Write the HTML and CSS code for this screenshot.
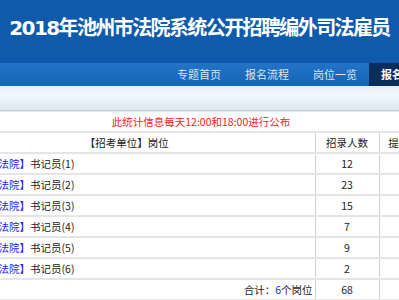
FILE: index.html
```html
<!DOCTYPE html>
<html lang="zh-CN">
<head>
  <meta charset="UTF-8">
  <title>2018年池州市法院系统公开招聘编外司法雇员</title>
  <link rel="stylesheet" href="styles.css">
</head>
<body>

<div class="header">
  <h1>2018年池州市法院系统公开招聘编外司法雇员</h1>
</div>

<div class="nav">
  <ul>
    <li><a href="#">专题首页</a></li>
    <li><a href="#">报名流程</a></li>
    <li><a href="#">岗位一览</a></li>
    <li class="active"><a href="#">报名统计</a></li>
    <li><a href="#">成绩查询</a></li>
  </ul>
</div>

<div class="band"></div>

<div class="main">
  <table>
    <colgroup>
      <col class="c-post">
      <col class="c-num">
      <col class="c-sub">
    </colgroup>
    <tr class="notice">
      <td colspan="3">此统计信息每天12:00和18:00进行公布</td>
    </tr>
    <tr>
      <th class="col-post">【招考单位】岗位</th>
      <th class="col-num">招录人数</th>
      <th class="col-sub">提交报名人数</th>
    </tr>
    <tr>
      <td class="post"><span class="unit">【池州市中级法院】</span>书记员(1)</td>
      <td class="num">12</td>
      <td class="sub"></td>
    </tr>
    <tr>
      <td class="post"><span class="unit">【池州市中级法院】</span>书记员(2)</td>
      <td class="num">23</td>
      <td class="sub"></td>
    </tr>
    <tr>
      <td class="post"><span class="unit">【池州市中级法院】</span>书记员(3)</td>
      <td class="num">15</td>
      <td class="sub"></td>
    </tr>
    <tr>
      <td class="post"><span class="unit">【池州市中级法院】</span>书记员(4)</td>
      <td class="num">7</td>
      <td class="sub"></td>
    </tr>
    <tr>
      <td class="post"><span class="unit">【池州市中级法院】</span>书记员(5)</td>
      <td class="num">9</td>
      <td class="sub"></td>
    </tr>
    <tr>
      <td class="post"><span class="unit">【池州市中级法院】</span>书记员(6)</td>
      <td class="num">2</td>
      <td class="sub"></td>
    </tr>
    <tr class="total">
      <td class="post">合计：<span class="count">6</span>个岗位</td>
      <td class="num">68</td>
      <td class="sub"></td>
    </tr>
  </table>
</div>

</body>
</html>
```

FILE: styles.css
```css
body { margin: 0; overflow: hidden; background: #fff; font-family: "Noto Sans CJK SC", sans-serif; color: #222; }

.header { height: 63px; background: #0f5aaa; box-sizing: border-box; padding-top: 16px; }
.header h1 { margin: 0; text-align: center; color: #fff; font-family: "DejaVu Sans", "Noto Sans CJK SC", sans-serif; font-size: 20px; line-height: 24px; letter-spacing: -1.6px; white-space: nowrap; }

.nav { height: 23px; background: linear-gradient(#2274c8, #1564b6); overflow: hidden; }
.nav ul { list-style: none; margin: 0; padding: 0 0 0 165px; display: flex; white-space: nowrap; }
.nav li a { display: block; padding: 0 12px; line-height: 23px; font-size: 11px; color: #d9e5f2; text-decoration: none; }
.nav li.active a { background: #0b2d5c; color: #fff; font-weight: bold; }

.band { height: 24px; background: linear-gradient(#e3eef9, #f3f8fd 35%, #dae8f5); border-bottom: 1px solid #cdcdcd; box-shadow: 0 1px 0 #e8e8e8; }

.main { margin: 1px 0 0 -68px; width: 528px; }
table { width: 528px; border-collapse: collapse; font-size: 10.5px; table-layout: fixed; }
.c-post { width: 383px; }
.c-num { width: 64px; }
.c-sub { width: 81px; }
td, th { height: 19px; padding: 0; border-bottom: 2px solid #e5e5e5; font-weight: normal; line-height: 19px; white-space: nowrap; overflow: hidden; }
.notice td { text-align: center; color: #ff2020; padding-left: 10px; }
.col-post { text-align: center; padding-left: 7px; }
.col-num, .col-sub, .num, .sub { border-left: 1px solid #cfcfcf; text-align: center; }
.post { padding-left: 3.5px; }
.unit { color: #2323ff; }
.total .post { text-align: right; padding-right: 2px; }
.count { color: #2323ff; }
```
